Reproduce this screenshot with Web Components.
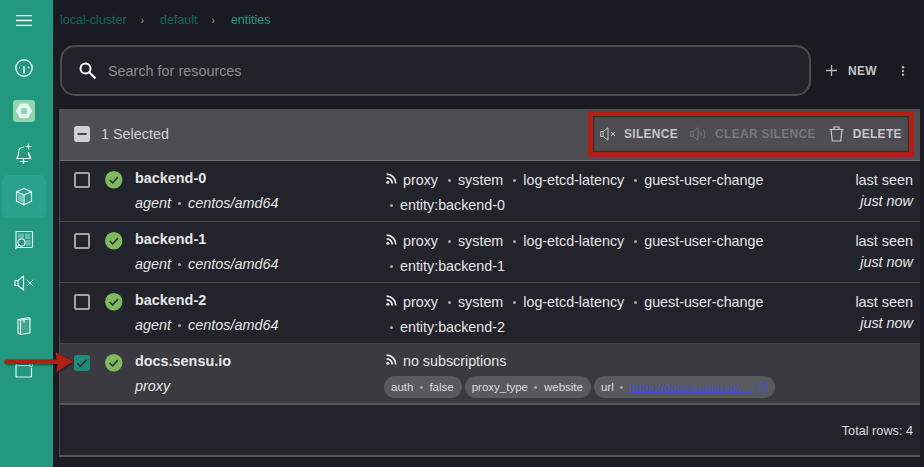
<!DOCTYPE html>
<html lang="en"><head><meta charset="utf-8"><title>Entities</title>
<style>
html,body{margin:0;height:100%;background:#1a1b22;overflow:hidden}
body{font-family:"Liberation Sans",Arial,sans-serif;color:#e6e6e6;font-size:14.4px}
</style></head><body>
<app-shell>
  <side-nav slot="nav"></side-nav>
  <bread-crumbs></bread-crumbs>
  <search-bar></search-bar>
  <entity-table>
    <table-head slot="head"></table-head>
    <entity-row name="backend-0" kind="agent" os="centos/amd64" subs="proxy,system,log-etcd-latency,guest-user-change,entity:backend-0"></entity-row>
    <entity-row name="backend-1" kind="agent" os="centos/amd64" subs="proxy,system,log-etcd-latency,guest-user-change,entity:backend-1"></entity-row>
    <entity-row name="backend-2" kind="agent" os="centos/amd64" subs="proxy,system,log-etcd-latency,guest-user-change,entity:backend-2"></entity-row>
    <entity-row name="docs.sensu.io" kind="proxy" selected></entity-row>
  </entity-table>
</app-shell>
<script>
const def=(name,html,init)=>customElements.define(name,class extends HTMLElement{
  connectedCallback(){ if(this.shadowRoot) return; const r=this.attachShadow({mode:'open'});
    r.innerHTML=typeof html==='function'?html(this):html; init&&init(r,this);}
});
const rss='<svg width="11" height="11" viewBox="0 0 11 11" fill="none" stroke="#ededed" stroke-width="1.700"><circle cx="1.800" cy="9.200" r="1.500" fill="#ededed" stroke="none"/><path d="M.6 4.800a5.600 5.600 0 0 1 5.600 5.600M.6 1.200a9.200 9.200 0 0 1 9.200 9.200"/></svg>';
def('app-shell',`<style>:host{display:flex;width:924px;height:467px}
main{flex:1;min-width:0;display:flex;flex-direction:column;padding:0 4px 0 6px}</style>
<slot name="nav"></slot><main><slot></slot></main>
<svg style="position:absolute;left:0;top:340px;filter:drop-shadow(1px 1px 1px rgba(0,0,0,.5))" width="80" height="40" viewBox="0 0 80 40"><path d="M6 19.500h50.500l-1-7.500L73 21.500 56.500 32l1-8H7a2.200 2.200 0 0 1-1-4.500z" fill="#b01f15"/></svg>`);
const ic='fill="none" stroke="#e3f4ef" stroke-width="1.200" stroke-linecap="round" stroke-linejoin="round"';
def('side-nav',`<style>:host{display:flex;flex:none;width:53px;height:467px;flex-direction:column;box-sizing:border-box;padding-left:2px;background:#229881;overflow:hidden}
.top{height:46px;padding-top:15px;box-sizing:border-box;width:44px;display:flex;justify-content:center;align-items:flex-start}
.i{flex:none;width:44px;height:43px;display:flex;align-items:center;justify-content:center;border-radius:6px}
.active{background:#2aa18d}
.tile{width:22px;height:22px;border-radius:3px;background:#8fd5ae;display:flex;align-items:center;justify-content:center}
svg{display:block}</style>
<div class="top"><svg width="16" height="11" viewBox="0 0 16 11" fill="none" stroke="#fff" stroke-width="1.300"><path d="M0 .7h16M0 5.500h16M0 10.300h16"/></svg></div>
<div class="i"><svg width="20" height="20" viewBox="0 0 20 20" ${ic}><circle cx="10" cy="10" r="8.200" stroke-width="1.400"/><path d="M10 9v5.500" stroke-width="1.800"/><path d="M14.500 9.500v.1" stroke-width="2"/><path d="M5.500 9.500v.1" stroke-width="1.300"/></svg></div>
<div class="i"><div class="tile"><svg width="18" height="16" viewBox="0 0 18 16"><path d="M5 .8h8L17.200 8 13 15.200H5L.8 8z" fill="#e4f5ee"/><circle cx="9" cy="8" r="3.300" fill="#8fd5ae"/></svg></div></div>
<div class="i"><svg width="20" height="22" viewBox="0 0 20 22" ${ic}><path d="M2.500 15.500c2-1.500 2-3.500 2-6 0-3 2-5 5-5.500M14.500 9.500c0 2.500.5 4.500 2.500 6zM2.500 15.500h14.500M6.500 18.500h7M9.500 15.500v5"/><path d="M14.500 1v5M12 3.500h5"/></svg></div>
<div class="i active"><svg width="18" height="19" viewBox="0 0 18 19" ${ic} stroke-width="1.300"><path d="M9 1.500l7.500 3.200v9.500L9 17.700 1.500 14.200V4.700z"/><path d="M1.500 4.700L9 8l7.500-3.300M9 8v9.700"/><path d="M3 6.500l5 2.200v7L3 13.500z" fill="#e3f4ef" fill-opacity=".4" stroke="none"/></svg></div>
<div class="i"><svg width="20" height="20" viewBox="0 0 20 20" ${ic}><rect x="2" y="1.500" width="16.500" height="16" rx="1"/><rect x="4" y="3.500" width="6" height="5.500" fill="#e3f4ef" fill-opacity=".35" stroke="none"/><rect x="11" y="3.500" width="5.500" height="5.500" fill="#e3f4ef" fill-opacity=".35" stroke="none"/><rect x="11.500" y="10" width="5" height="5.500" fill="#e3f4ef" fill-opacity=".35" stroke="none"/><circle cx="7.500" cy="12.500" r="3.500" fill="#229881"/><path d="M5 15l-3.500 3.500"/></svg></div>
<div class="i"><svg width="20" height="16" viewBox="0 0 20 16" ${ic}><path d="M1 5.500h3L9.500 1v14L4 10.500H1zM4 5.500v5"/><path d="M13 5l6 6M19 5l-6 6" stroke-width="1"/></svg></div>
<div class="i"><svg width="16" height="20" viewBox="0 0 16 20" ${ic} stroke-width="1"><path d="M2 3.500L13 1.500l1 1.500v14L4.500 18.500 2 17z"/><path d="M4.500 4v14.500" /><path d="M2 3.500l2.500.5L14 3" /><path d="M8 3.500v3" /><path d="M4.500 4L14 3v14l-9.500 1.500z" fill="#e3f4ef" fill-opacity=".15" stroke="none"/></svg></div>
<div class="i"><svg width="20" height="20" viewBox="0 0 20 20" ${ic}><path d="M2 6.500h13.500M17.500 9v8a1 1 0 0 1-1 1H3a1 1 0 0 1-1-1V6.500l1-3h11"/><circle cx="17" cy="6" r="1.500"/></svg></div>`);
def('bread-crumbs',`<style>:host{display:flex;align-items:center;height:40px;margin-bottom:5px;padding-left:1px;font-size:12.500px;color:#14675a;flex:none}
.s{font-size:10px;color:#a0a0a0;margin:0 16px 0 14px}.c{color:#1f9a85}</style>
<span>local-cluster</span><span class="s">›</span><span>default</span><span class="s">›</span><span class="c">entities</span>`);
def('search-bar',`<style>:host{display:flex;flex:none;align-items:center;height:51px;margin-bottom:13px}
.box{box-sizing:border-box;margin-left:1px;width:751px;height:51px;border:2px solid #4c4c50;border-radius:15px;background:#22232a;display:flex;align-items:center;padding-left:17px;color:#8d8d90;font-size:14.400px}
.box svg{flex:none;margin:0 12px 0 0}
.new{display:flex;align-items:center;margin-left:15px;color:#c4c4c4;font-weight:700;font-size:12px;letter-spacing:.3px}
.new svg{margin-right:11px}.new svg.dots{margin:0 0 0 24px}</style>
<div class="box"><svg width="17" height="17" viewBox="0 0 17 17" fill="none" stroke="#fff" stroke-width="2"><circle cx="6.500" cy="6.500" r="5"/><path d="M10.500 10.500l6 6" /></svg><span>Search for resources</span></div>
<div class="new"><svg width="11" height="11" viewBox="0 0 11 11" stroke="#b5b5b5" stroke-width="1.300"><path d="M5.500 0v11M0 5.500h11"/></svg><span>NEW</span>
<svg class="dots" width="4" height="10" viewBox="0 0 4 10" fill="#b5b5b5"><circle cx="2" cy="1.200" r="1.200"/><circle cx="2" cy="5" r="1.200"/><circle cx="2" cy="8.800" r="1.200"/></svg></div>`);
def('entity-table',`<style>:host{display:flex;flex-direction:column;flex:none;box-sizing:border-box;width:861px;height:348px;background:#22232b;border-left:1px solid #4a4a4e;border-bottom:2px solid #55555a}
.f{margin-top:auto;box-sizing:border-box;height:51px;display:flex;align-items:center;justify-content:flex-end;padding:1px 7px 0;font-size:12.700px;color:#dedede}
</style><slot name="head"></slot><slot></slot><div class="f">Total rows: 4</div>`);
def('chk-box',h=>`<style>:host{display:block;flex:none;width:16px;height:16px;box-sizing:border-box}
.b{width:16px;height:16px;box-sizing:border-box;border:2px solid #a3a3a5;border-radius:2px;display:block}
.fill{border:0}</style>${
 h.getAttribute('state')==='checked'?'<svg class="b fill" viewBox="0 0 16 16"><rect width="16" height="16" rx="2" fill="#1f8a7a"/><path d="M3.500 8.300l3 3 6-6.500" fill="none" stroke="#2d3138" stroke-width="1.500"/></svg>':
 h.getAttribute('state')==='mixed'?'<svg class="b fill" viewBox="0 0 16 16"><rect width="16" height="16" rx="2" fill="#d0d0d2"/><path d="M3.500 8h9" stroke="#45454a" stroke-width="2"/></svg>':'<span class="b"></span>'}`);
const g='#c6c6c8', d='#77777a';
def('table-head',`<style>:host{display:flex;flex:none;box-sizing:border-box;align-items:center;height:52px;background:#4d4d52;border-bottom:1px solid #707074;padding:0 0 2px 14px}
.t{margin-left:11px;color:#d0d0d0;font-size:14.400px}
.tools{margin-left:auto;margin-right:6px;box-sizing:border-box;width:326px;height:46px;border:5px solid #b01f15;box-shadow:inset 0 0 2px 1px #2b2b2f;display:flex;align-items:center;padding-left:7px;font-weight:700;font-size:12px;letter-spacing:.3px;color:${g};white-space:nowrap}
.off{color:${d}}svg{flex:none;margin-right:7px;display:block}
.a2{margin-left:12px;margin-right:8px}.a3{margin-left:13px;margin-right:9px}</style>
<chk-box state="mixed"></chk-box><span class="t">1 Selected</span>
<div class="tools">
<svg width="17" height="14" viewBox="0 0 17 14" fill="none" stroke="${g}"><path d="M.7 4.500h2.500L8 .8v12.400L3.200 9.500H.7zM3.200 4.500v5"/><path d="M11 5l4 4M15 5l-4 4"/></svg><span>SILENCE</span>
<svg class="a2" width="17" height="14" viewBox="0 0 17 14" fill="none" stroke="${d}"><path d="M.7 4.500h2.500L8 .8v12.400L3.200 9.500H.7zM3.200 4.500v5"/><path d="M10.500 4.500c1 1.500 1 3.500 0 5M13.500 3c1.500 2.500 1.500 5.500 0 8"/></svg><span class="off">CLEAR SILENCE</span>
<svg class="a3" width="15" height="16" viewBox="0 0 15 16" fill="none" stroke="${g}" stroke-width="1.200"><path d="M.5 3.500h14M5 3.500V1h5v2.500M2 3.500l1.300 11.500h8.400L13 3.500"/></svg><span>DELETE</span></div>`);
def('sub-list',h=>{const s=(h.getAttribute('items')||'').split(',').filter(Boolean);
 return `<style>:host{display:block;font-size:14.300px}
.l{display:flex;flex-wrap:wrap;align-items:center;row-gap:5px}
.ic{width:18px;height:20px;display:flex;align-items:center;padding-left:1px;box-sizing:border-box;margin-top:-4px}
.it{height:20px;line-height:20px;white-space:nowrap;display:inline-flex;align-items:center}
.it+.it{margin-left:10px}
.b{width:3px;height:3px;border-radius:50%;background:#a8a8aa;margin-right:7px;margin-left:0}
.it.w{margin-left:5px}
</style><div class="l"><span class="ic">${rss}</span>${s.map((t,i)=>`<span class="it ${i==4?'w':''}">${i?'<i class="b"></i>':''}${t}</span>`).join('')}${s.length?'':'<span class="it">no subscriptions</span>'}</div>`});
def('meta-chip',h=>`<style>:host{display:inline-flex;align-items:center;height:22px;border-radius:11px;background:#5a5a5e;padding:0 8px 0 7px;font-size:11.500px;color:#dcdcdc;white-space:nowrap;flex:none}
i{width:3px;height:3px;border-radius:50%;background:#a8a8aa;margin:0 6.500px}</style>
<span>${h.getAttribute('k')}</span><i></i><slot></slot>`);
def('entity-row',h=>{const sel=h.hasAttribute('selected');
return `<style>:host{display:grid;flex:none;grid-template-columns:31px 30px 250px 1fr auto;box-sizing:border-box;height:61px;padding:0 7px 0 14px;border-bottom:1px solid #45454a;${sel?'background:#3a3a40;border-bottom:2px solid #55555a;':''}}
chk-box{margin-top:11px}
.st{margin-top:10px}
.n{font-weight:700;font-size:14.400px;line-height:18px;margin-top:8px}
.s{font-style:italic;font-size:14.400px;line-height:18px;margin-top:7px;display:flex;align-items:center}
.s i{width:3px;height:3px;border-radius:50%;background:#a8a8aa;margin:0 7px}
.subs{padding-top:${sel?7:9}px}
.chips{display:flex;gap:3px;margin-top:5px;margin-left:-1px}
a{color:#3d4fd6;text-decoration:underline;white-space:nowrap;letter-spacing:.1px}
.ls{text-align:right;padding-top:9px;line-height:20px}.ls em{display:block;margin-top:1px}
.link{display:inline-flex;align-items:center;gap:4px}
</style>
<chk-box ${sel?'state="checked"':''}></chk-box>
<svg class="st" width="18" height="18" viewBox="0 0 18 18" style="width:17.500px;height:17.500px"><circle cx="9" cy="9" r="9" fill="#7fbb5e"/><path d="M4.800 9.300l3 3 5.500-6" fill="none" stroke="#2b2e30" stroke-width="1.600"/></svg>
<div><div class="n">${h.getAttribute('name')}</div><div class="s">${h.getAttribute('kind')}${h.getAttribute('os')?'<i></i>'+h.getAttribute('os'):''}</div></div>
<div class="subs"><sub-list items="${h.getAttribute('subs')||''}"></sub-list>${sel?`<div class="chips"><meta-chip k="auth">false</meta-chip><meta-chip k="proxy_type">website</meta-chip><meta-chip k="url"><span class="link"><a>https://docs.sensu.io/…</a><svg width="11" height="11" viewBox="0 0 11 11" fill="none" stroke="#3d4fd6" stroke-width="1.200"><path d="M4.500 1.500H1v8.500h8.500V6.500M6 .8h4.200V5M10 1L5 6"/></svg></span></meta-chip></div>`:''}</div>
<div class="ls">${sel?'':'last seen<em>just now</em>'}</div>`});
</script>
</body></html>
